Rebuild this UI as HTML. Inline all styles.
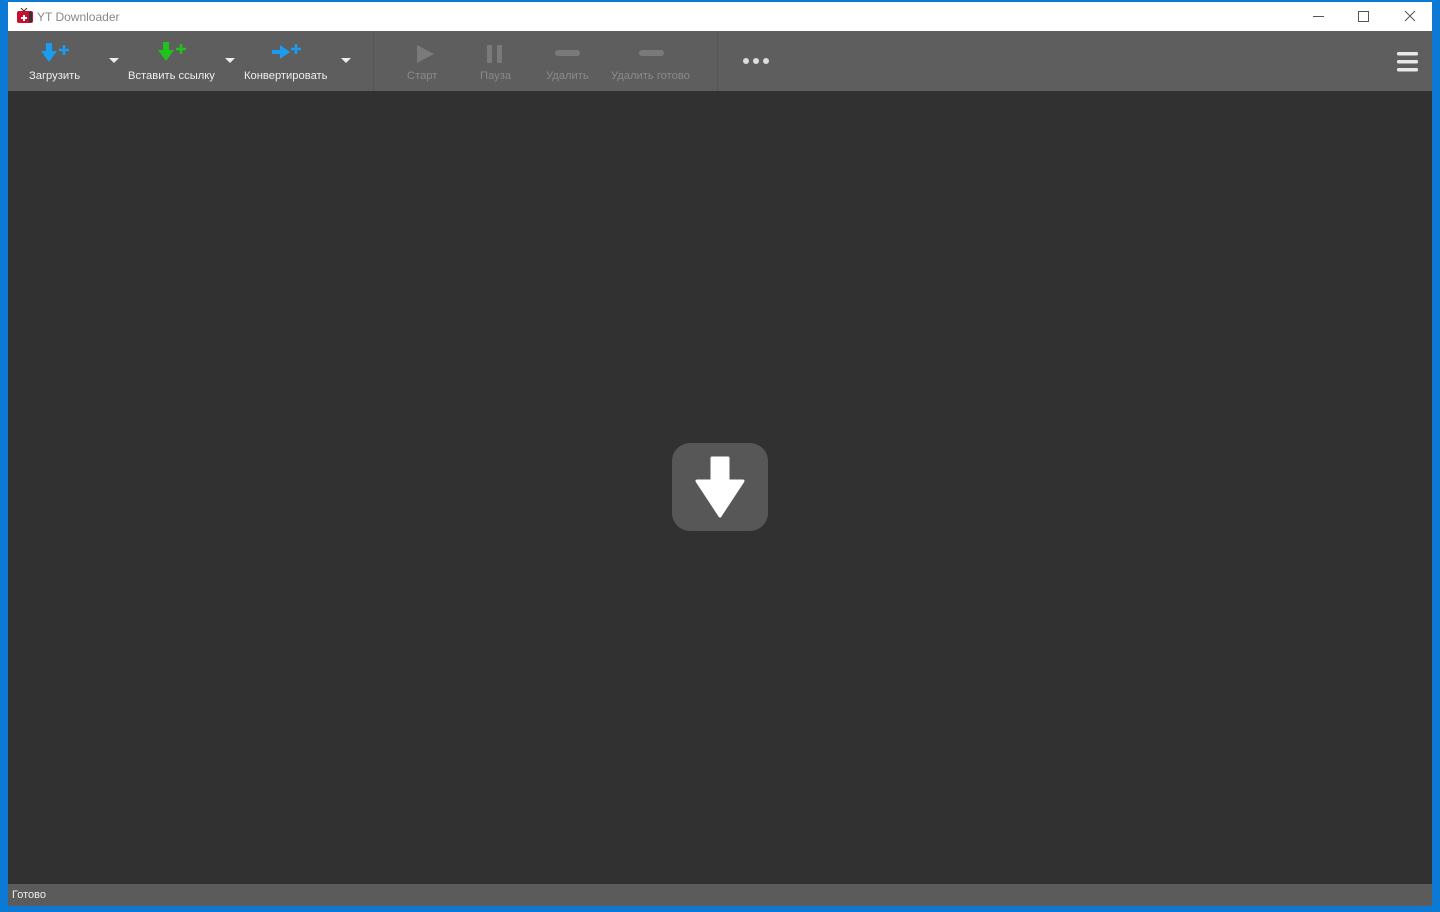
<!DOCTYPE html>
<html><head><meta charset="utf-8"><style>
body{margin:0;width:1440px;height:912px;background:#0c79d4;position:relative;overflow:hidden;font-family:"Liberation Sans","DejaVu Sans",sans-serif}
.win{position:absolute;left:8px;top:2px;width:1424px;height:904px;background:#313131}
.title{position:absolute;left:0;top:0;width:1424px;height:29px;background:#fff}
.title .t{position:absolute;left:29px;top:8px;font-size:12px;color:#888}
.tb{position:absolute;left:0;top:29px;width:1424px;height:60px;background:#5e5e5e}
.lbl{position:absolute;top:39px;font-size:11.2px;color:#eee;white-space:nowrap}
.dis{color:#8a8a8a}
.caret{position:absolute;top:27px;width:0;height:0;border-left:5px solid transparent;border-right:5px solid transparent;border-top:5px solid #eee}
.sep{position:absolute;top:0;width:1px;height:60px;background:#555}
.status{position:absolute;left:0;top:882px;width:1424px;height:22px;background:#5b5b5b}
.status span{position:absolute;left:4px;top:5px;font-size:11px;color:#eee}
</style></head><body>
<div class="win">
<div class="title">
<svg style="position:absolute;left:9px;top:6px" width="16" height="16"><rect x="0" y="3" width="16" height="12" rx="2" fill="#c8102e"/><rect x="12" y="4" width="3" height="10" fill="#333"/><path d="M6 7h2v2h2v2H8v2H6v-2H4V9h2z" fill="#fff"/><path d="M4 0l3 3M10 0l-3 3" stroke="#333"/></svg>
<span class="t">YT Downloader</span>
<div style="position:absolute;left:1305px;top:14px;width:11px;height:1px;background:#555"></div>
<div style="position:absolute;left:1350px;top:9px;width:9px;height:9px;border:1px solid #555"></div>
<svg style="position:absolute;left:1396px;top:8px" width="12" height="12"><path d="M1 1l10 10M11 1L1 11" stroke="#555"/></svg>
</div>
<div class="tb">
<svg style="position:absolute;left:32px;top:12px" width="36" height="22"><path d="M6 0h6v8h5l-8 11-8-11h5z" fill="#1a9cf0"/><path d="M24 2v10M19 7h10" stroke="#1a9cf0" stroke-width="2.5"/></svg>
<div class="lbl" style="left:21px;">Загрузить</div>
<div class="caret" style="left:101px"></div>
<svg style="position:absolute;left:149px;top:11px" width="36" height="22"><path d="M6 0h6v8h5l-8 11-8-11h5z" fill="#1fc21f"/><path d="M24 2v10M19 7h10" stroke="#1fc21f" stroke-width="2.5"/></svg>
<div class="lbl" style="left:120px;">Вставить ссылку</div>
<div class="caret" style="left:217px"></div>
<svg style="position:absolute;left:264px;top:11px" width="36" height="22"><path d="M0 8h8V3l10 7-10 7v-5H0z" fill="#1a9cf0"/><path d="M24 2v10M19 7h10" stroke="#1a9cf0" stroke-width="2.5"/></svg>
<div class="lbl" style="left:236px;">Конвертировать</div>
<div class="caret" style="left:333px"></div>
<div class="sep" style="left:365px"></div>
<svg style="position:absolute;left:406px;top:12px" width="22" height="22"><path d="M3 2l17 9-17 9z" fill="#7a7a7a"/></svg>
<div class="lbl dis" style="left:399px;">Старт</div>
<svg style="position:absolute;left:477px;top:12px" width="22" height="22"><rect x="2" y="2" width="5" height="18" rx="1" fill="#7a7a7a"/><rect x="12" y="2" width="5" height="18" rx="1" fill="#7a7a7a"/></svg>
<div class="lbl dis" style="left:472px;">Пауза</div>
<div style="position:absolute;left:547px;top:19px;width:25px;height:6px;border-radius:3px;background:#7a7a7a"></div>
<div class="lbl dis" style="left:538px;">Удалить</div>
<div style="position:absolute;left:631px;top:19px;width:25px;height:6px;border-radius:3px;background:#7a7a7a"></div>
<div class="lbl dis" style="left:603px;">Удалить готово</div>
<div class="sep" style="left:709px"></div>
<svg style="position:absolute;left:734px;top:25px" width="30" height="10"><circle cx="4" cy="5" r="3" fill="#ddd"/><circle cx="14" cy="5" r="3" fill="#ddd"/><circle cx="24" cy="5" r="3" fill="#ddd"/></svg>
<svg style="position:absolute;left:1388px;top:20px" width="24" height="22"><rect x="1" y="1" width="21" height="3.5" rx="1.5" fill="#e8e8e8"/><rect x="1" y="9" width="21" height="3.5" rx="1.5" fill="#e8e8e8"/><rect x="1" y="17" width="21" height="3.5" rx="1.5" fill="#e8e8e8"/></svg>
</div>
<svg style="position:absolute;left:664px;top:441px" width="96" height="88"><rect x="0" y="0" width="96" height="88" rx="18" fill="#575757"/><path d="M40 15h16v23h15L48 73 25 38h15z" fill="#fff" stroke="#fff" stroke-width="3" stroke-linejoin="round"/></svg>
<div class="status"><span>Готово</span></div>
</div>
</body></html>
